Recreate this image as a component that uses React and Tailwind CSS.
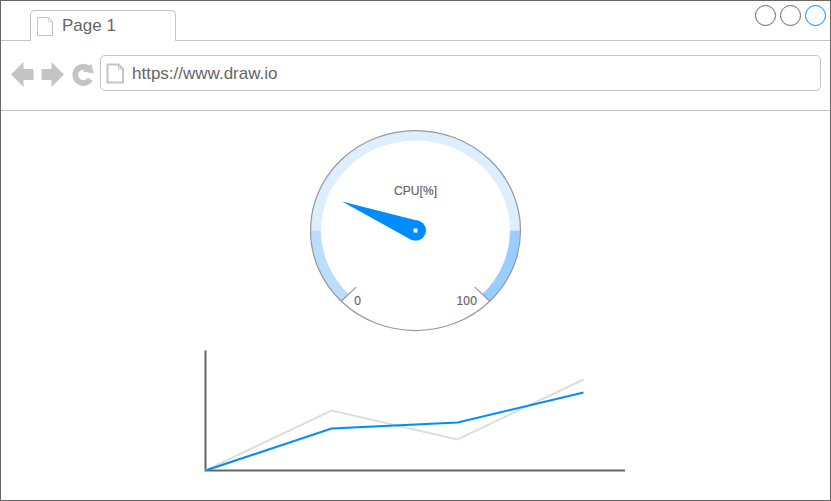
import React from 'react';

function PageIcon({ className, bold = false }) {
  return bold ? (
    <svg className={className} width="19" height="21" viewBox="0 0 19 21" fill="none" stroke="#c4c4c4">
      <path d="M1.5 1.5H12.5L17 6V19.5H1.5Z" strokeWidth="2" />
      <path d="M12.5 1.5V6H17" strokeWidth="1" />
    </svg>
  ) : (
    <svg className={className} width="17" height="20" viewBox="0 0 17 20" fill="none" stroke="#c4c4c4">
      <path d="M.5 .5H11.5L15.5 4.5V18.5H.5Z" />
      <path d="M11.5 .5V4.5H15.5" strokeOpacity=".6" />
    </svg>
  );
}

function TabBar() {
  return (
    <div className="flex h-10 shrink-0">
      <div className="w-[29px] border-b border-[#c4c4c4]" />
      <div className="mt-[9px] flex w-[146px] rounded-t-[5px] border-x border-t border-[#c4c4c4]">
        <PageIcon className="mt-1.5 ml-1.5 shrink-0" />
        <span className="mt-[3px] ml-2 text-[17px] leading-6">Page 1</span>
      </div>
      <div className="flex flex-1 justify-end gap-1 border-b border-[#c4c4c4] pt-1 pr-1">
        <span className="size-[21px] rounded-full border border-[#666]" />
        <span className="size-[21px] rounded-full border border-[#666]" />
        <span className="size-[21px] rounded-full border border-[#008cff]" />
      </div>
    </div>
  );
}

function Toolbar() {
  return (
    <div className="flex h-[70px] shrink-0 border-b border-[#c4c4c4] pt-[14px] pl-[9px]">
      <svg className="mt-1.5 shrink-0" width="90" height="28" viewBox="10 61 90 28" fill="#c4c4c4">
        <path d="M11 74.5L23.5 62V69H33.5V80H23.5V87Z" />
        <path d="M64 74.5L51.5 62V69H41.5V80H51.5V87Z" />
        <path d="M90.2 79.2A8.1 8.1 0 1 1 88.5 68.6" fill="none" stroke="#c4c4c4" strokeWidth="5.8" />
        <path d="M91.3 63.7L93.8 73.6L82.6 71.6Z" />
      </svg>
      <div className="flex h-9 w-[721px] rounded-[5px] border border-[#c4c4c4]">
        <PageIcon bold className="mt-[7px] ml-[5px] shrink-0" />
        <span className="mt-[6px] ml-[7px] text-[17px] leading-6">https://www.draw.io</span>
      </div>
    </div>
  );
}

function Gauge() {
  return (
    <svg className="ml-[309px] shrink-0" width="212" height="204" viewBox="310 129 212 204">
      <g stroke="none">
        <path fill="#ddeeff" d="M310.5 230.5A105 100 0 0 1 520.5 230.5H510A94.5 90 0 0 0 321 230.5Z" />
        <path fill="#bbddff" d="M310.5 230.5A105 100 0 0 0 341.25 301.2L348.7 294.1A94.5 90 0 0 1 321 230.5Z" />
        <path fill="#99ccff" d="M520.5 230.5A105 100 0 0 1 489.75 301.2L482.3 294.1A94.5 90 0 0 0 510 230.5Z" />
      </g>
      <g fill="none" stroke="#999" strokeWidth="1.25">
        <ellipse cx="415.5" cy="230.5" rx="105" ry="100" />
        <path d="M341.25 301.2L356.1 287.1M489.75 301.2L474.9 287.1" />
      </g>
      <g fill="#008cff">
        <circle cx="415.7" cy="230.5" r="10.3" />
        <path d="M342 201.5L418 220.8L411.2 239.8Z" />
      </g>
      <rect x="413.5" y="228.5" width="4" height="4" fill="white" />
      <g fill="#666" stroke="#666" strokeWidth=".2" fontSize="12" textAnchor="middle">
        <text x="415.5" y="195" textLength="43">CPU[%]</text>
        <text x="357.5" y="305">0</text>
        <text x="466.7" y="305" textLength="20.5">100</text>
      </g>
    </svg>
  );
}

function LineChart() {
  return (
    <svg className="mt-[17px] ml-[203px] shrink-0" width="423" height="123" viewBox="204 350 423 123" fill="none" strokeWidth="2">
      <path stroke="#666" d="M205.5 350.5V470.5H625" />
      <path stroke="#ddd" d="M205.5 470.5L331.5 410.5L457.5 439.5L583.5 379.5" />
      <path stroke="#008cff" d="M205.5 470.5L331.5 428.5L457.5 422.5L583.5 392.5" />
    </svg>
  );
}

export default function App() {
  return (
    <div className="flex h-[501px] w-[831px] flex-col overflow-hidden border border-[#666] bg-white font-['Liberation_Sans',Arial,sans-serif] text-[#666]">
      <TabBar />
      <Toolbar />
      <main className="flex flex-1 flex-col pt-[18px]">
        <Gauge />
        <LineChart />
      </main>
    </div>
  );
}
